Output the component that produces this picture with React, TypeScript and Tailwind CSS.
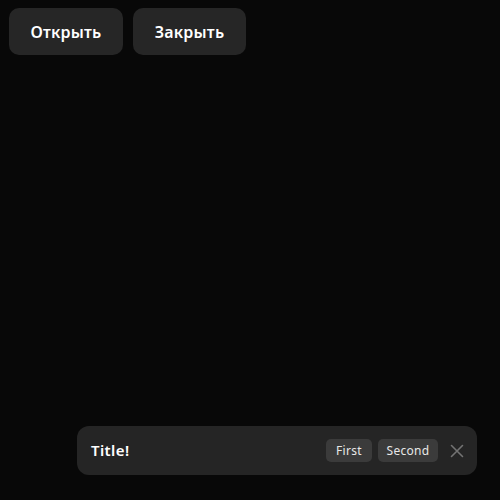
import React from "react";

export default function App() {
  return (
    <div
      className="w-[500px] h-[500px] bg-[#080808] relative overflow-hidden"
      style={{ fontFamily: '"Noto Sans", "DejaVu Sans", sans-serif' }}
    >
      <div className="flex gap-[10px] pl-[9px] pt-[8px]">
        <button className="w-[114px] h-[47px] rounded-[10px] bg-[#262626] text-white text-[16px] font-semibold tracking-[0.2px]">
          Открыть
        </button>
        <button className="w-[113px] h-[47px] rounded-[10px] bg-[#262626] text-white text-[16px] font-semibold tracking-[0.2px]">
          Закрыть
        </button>
      </div>
      <div className="absolute left-[77px] top-[426px] w-[400px] h-[49px] rounded-[12px] bg-[#252525] flex items-center pl-[14px] pr-[10px]">
        <span className="text-white text-[15px] font-semibold tracking-[0.4px] flex-1">Title!</span>
        <div className="flex items-center gap-[6px]">
          <span className="h-[23px] w-[46px] justify-center rounded-[5px] bg-[#3b3b3b] text-[#e8e8e8] text-[12px] tracking-[0.3px] flex items-center">
            First
          </span>
          <span className="h-[23px] w-[60px] justify-center rounded-[5px] bg-[#3b3b3b] text-[#e8e8e8] text-[12px] tracking-[0.3px] flex items-center">
            Second
          </span>
          <svg width="20" height="20" viewBox="0 0 20 20" className="ml-[3px]">
            <path d="M4.5 4.5 L15.5 15.5 M15.5 4.5 L4.5 15.5" stroke="#737373" strokeWidth="1.6" strokeLinecap="round" />
          </svg>
        </div>
      </div>
    </div>
  );
}
